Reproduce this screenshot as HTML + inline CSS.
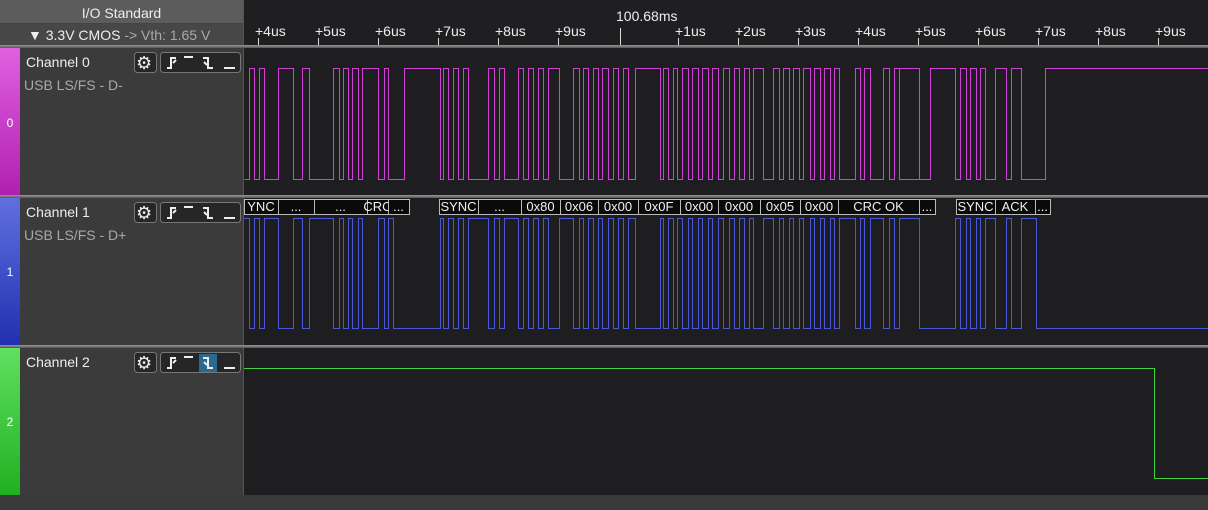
<!DOCTYPE html>
<html><head><meta charset="utf-8"><style>
*{margin:0;padding:0;box-sizing:border-box}
body{width:1208px;height:510px;background:#1e1e21;font-family:"Liberation Sans",sans-serif;position:relative;overflow:hidden}
.abs{position:absolute}
.left{left:0;width:243px;background:#3b3b3b}
.hdr1{left:0;top:0;width:243px;height:24px;background:#5c5c5c;color:#eee;font-size:14px;text-align:center;line-height:26px;border-bottom:1px solid #444}
.hdr2{left:0;top:24px;width:243px;height:22px;background:#474747;color:#eee;font-size:14px;line-height:22px;padding-left:28px}
.strip{left:0;width:20px}
.num{width:20px;text-align:center;color:#fff;font-size:12px}
.cname{left:26px;color:#eee;font-size:14px}
.csub{left:24px;color:#a8a8a8;font-size:14px}
.btn{border:1px solid #777;background:#262626;border-radius:3px}
.sep{left:0;width:1208px;height:3px;background:linear-gradient(#999,#555)}
.tl{color:#eee;font-size:14px}
</style></head><body>
<div class="abs hdr1">I/O Standard</div>
<div class="abs hdr2">▼ 3.3V CMOS <span style="color:#aaa">-&gt; Vth: 1.65 V</span></div>
<div class="abs" style="left:243px;top:0;width:1px;height:510px;background:#555"></div>
<div class="abs" style="left:244px;top:0;width:964px;height:46px;background:#1f1f22"></div>
<div class="abs tl" style="left:616px;top:8px">100.68ms</div>
<svg class="abs" style="left:0;top:0" width="1208" height="48">
<g stroke="#ddd" stroke-width="1">
<line x1="620.5" y1="28" x2="620.5" y2="46"/>
</g>
<g id="ticks" stroke="#ddd"></g>
<g id="tlbl" fill="#eee" font-size="14" font-family="Liberation Sans, sans-serif"></g>
</svg>
<div class="abs sep" style="top:45px"></div>
<div class="abs sep" style="top:195px"></div>
<div class="abs sep" style="top:345px"></div>
<div class="abs" style="left:0;top:495px;width:1208px;height:15px;background:#3a3a3a"></div>

<div class="abs left" style="top:48px;height:147px"></div>
<div class="abs left" style="top:198px;height:147px"></div>
<div class="abs left" style="top:348px;height:147px"></div>
<div class="abs strip" style="top:48px;height:147px;background:linear-gradient(#e060e0,#b020b0)"></div>
<div class="abs strip" style="top:198px;height:147px;background:linear-gradient(#6070e0,#2030b0)"></div>
<div class="abs strip" style="top:348px;height:147px;background:linear-gradient(#60e060,#20b020)"></div>
<div class="abs num" style="left:0;top:116px">0</div>
<div class="abs num" style="left:0;top:265px">1</div>
<div class="abs num" style="left:0;top:415px">2</div>
<div class="abs cname" style="top:54px">Channel 0</div>
<div class="abs csub" style="top:77px">USB LS/FS - D-</div>
<div class="abs cname" style="top:204px">Channel 1</div>
<div class="abs csub" style="top:227px">USB LS/FS - D+</div>
<div class="abs cname" style="top:354px">Channel 2</div>

<svg class="abs" style="left:0;top:0" width="243" height="400" id="btns"></svg>

<svg class="abs" style="left:0;top:0" width="1208" height="510">
<path id="c0" fill="none" stroke="#d040d8" stroke-width="1"/>
<path id="c1" fill="none" stroke="#4858d8" stroke-width="1"/>
<path d="M244 368.5H1154.5V478.5H1208" fill="none" stroke="#40d040" stroke-width="1"/>
<g id="dec" font-size="13" font-family="Liberation Sans, sans-serif"></g>
</svg>
<script>
var ns="http://www.w3.org/2000/svg";
function el(p,t,a,txt){var e=document.createElementNS(ns,t);for(var k in a)e.setAttribute(k,a[k]);if(txt)e.textContent=txt;p.appendChild(e);return e;}
var tk=document.getElementById('ticks'),tl=document.getElementById('tlbl');
var labs=["+4us","+5us","+6us","+7us","+8us","+9us",null,"+1us","+2us","+3us","+4us","+5us","+6us","+7us","+8us","+9us"];
for(var i=0;i<16;i++){if(!labs[i])continue;var x=258+i*60+(i>6?0:0);if(i>6)x=678+(i-7)*60;
el(tk,'line',{x1:x+.5,y1:38,x2:x+.5,y2:46});el(tl,'text',{x:x-3,y:36},labs[i]);}
// buttons
var b=document.getElementById('btns');
[52,202,352].forEach(function(y,ci){
el(b,'rect',{x:134.5,y:y+.5,width:22,height:20,rx:3,fill:'#262626',stroke:'#777'});
el(b,'text',{x:136,y:y+17,fill:'#eee','font-size':18,'font-family':'DejaVu Sans'},'⚙');
el(b,'rect',{x:160.5,y:y+.5,width:80,height:20,rx:3,fill:'#262626',stroke:'#777'});
if(ci==2)el(b,'rect',{x:199,y:y+2,width:18,height:18,fill:'#2a6a90'});
var g='#eee';
el(b,'path',{d:'M167 '+(y+16)+'h4v-10h5M173 '+(y+11)+'l3-3',stroke:g,'stroke-width':2,fill:'none'});
el(b,'path',{d:'M184 '+(y+5)+'h9',stroke:g,'stroke-width':2,fill:'none'});
el(b,'path',{d:'M203 '+(y+6)+'h5v10h5M204 '+(y+10)+'l3 3',stroke:g,'stroke-width':2,fill:'none'});
el(b,'path',{d:'M224 '+(y+16)+'h11',stroke:g,'stroke-width':2,fill:'none'});
});
// waveforms
var c1=[[249,254],[259,264],[278,293],[302,309],[333,339],[343,348],[352,358],[362,378],[384,388],[393,440],
[443,448],[453,458],[463,468],[488,494],[499,504],[518,523],[528,533],[538,543],[548,559],[573,579],[583,588],[593,598],[602,608],[613,618],[623,628],[635,660],[663,668],[673,677],[682,688],[692,698],[702,708],[712,718],[723,729],[734,739],[744,749],[753,763],[773,779],[783,789],[793,799],[803,810],[814,820],[824,830],[834,839],[855,860],[864,870],[883,889],[894,899],[919,955],
[960,966],[970,976],[980,985],[995,1006],[1011,1021],[1036,1208]];
var c0=[[244,249],[254,259],[264,278],[293,302],[309,333],[339,343],[348,352],[358,362],[378,384],[388,404]];
for(var i=10;i<48;i++){var a=c1[i-1][1],e=c1[i][0];if(i==10)a=440;c0.push([a,e]);}
c0.push([899,930]);
c0.push([955,960],[966,970],[976,980],[985,995],[1006,1011],[1021,1045]);
function path(lows,hi,lo,start){var d='M'+start+' '+hi,cur=hi;lows.forEach(function(s){d+='H'+(s[0]+.5)+'V'+lo+'H'+(Math.min(s[1],1208)+.5);if(s[1]<1208)d+='V'+hi;});d+='H1208';return d;}
document.getElementById('c1').setAttribute('d',path(c1,218.5,328.5,244));
document.getElementById('c0').setAttribute('d',path(c0,68.5,179.5,244).replace('M244 68.5H244.5V179.5','M244.5 179.5'));
// decoder boxes
var dg=document.getElementById('dec');
var boxes=[[244,278,"YNC"],[278,314,"..."],[314,367,"..."],[367,388,"CRC"],[388,409,"..."],[439,478,"SYNC"],[478,521,"..."],[521,560,"0x80"],[560,598,"0x06"],[598,638,"0x00"],[638,680,"0x0F"],[680,718,"0x00"],[718,760,"0x05"],[760,800,"0x05"],[800,838,"0x00"],[838,919,"CRC OK"],[919,935,"..."],[956,995,"SYNC"],[995,1035,"ACK"],[1035,1050,"..."]];
boxes[13][2]="0x05";boxes[12][2]="0x00";
boxes.forEach(function(bx){el(dg,'rect',{x:bx[0]+.5,y:199.5,width:bx[1]-bx[0],height:15,fill:'#0a0a0a',stroke:'#bbb'});
el(dg,'text',{x:(bx[0]+bx[1])/2,y:211,fill:'#f0f0f0','text-anchor':'middle'},bx[2]);});
</script>
</body></html>
